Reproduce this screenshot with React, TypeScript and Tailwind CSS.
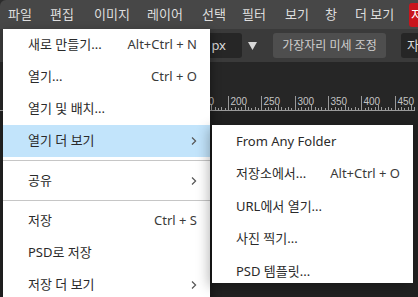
import React from "react";

const Chevron = () => (
  <svg width="6" height="10" viewBox="0 0 6 10" className="shrink-0">
    <path d="M1 1.5 L4.6 5 L1 8.5" fill="none" stroke="#555" strokeWidth="1.2" />
  </svg>
);

type Item = { label: string; shortcut?: string; sub?: boolean; active?: boolean } | "sep";

const mainItems: Item[] = [
  { label: "새로 만들기...", shortcut: "Alt+Ctrl + N" },
  { label: "열기...", shortcut: "Ctrl + O" },
  { label: "열기 및 배치..." },
  { label: "열기 더 보기", sub: true, active: true },
  "sep",
  { label: "공유", sub: true },
  "sep",
  { label: "저장", shortcut: "Ctrl + S" },
  { label: "PSD로 저장" },
  { label: "저장 더 보기", sub: true },
];

const subItems = [
  { label: "From Any Folder" },
  { label: "저장소에서...", shortcut: "Alt+Ctrl + O" },
  { label: "URL에서 열기..." },
  { label: "사진 찍기..." },
  { label: "PSD 템플릿..." },
];

const menus = [
  { label: "파일", w: "w-[42px]" },
  { label: "편집", w: "w-[44px]" },
  { label: "이미지", w: "w-[53px]" },
  { label: "레이어", w: "w-[55px]" },
  { label: "선택", w: "w-[40px]" },
  { label: "필터", w: "w-[43px]" },
  { label: "보기", w: "w-[40px]" },
  { label: "창", w: "w-[30px]" },
  { label: "더 보기", w: "w-[54px]" },
];

// ruler: 50 units per 33.3px, the 200 mark sits at x=228
const Ruler = () => {
  const step = 33.3 / 10;
  const origin = 228 - 33.3 * 2;
  const ticks = [];
  for (let i = 0; i < 80; i++) {
    const x = Math.round(origin + i * step) + 0.5;
    const major = i % 10 === 0;
    const mid = i % 5 === 0;
    ticks.push(
      <line
        key={i}
        x1={x}
        x2={x}
        y1={major ? 8 : mid ? 17 : i % 2 === 0 ? 19 : 20}
        y2={22}
        stroke="#9a9a9a"
        strokeWidth="1"
      />
    );
  }
  const labels = [100, 150, 200, 250, 300, 350, 400, 450];
  return (
    <svg width="415" height="23" className="block">
      {ticks}
      <line x1="0" x2="415" y1="22.5" y2="22.5" stroke="#9a9a9a" />
      {labels.map((n, k) => (
        <text
          key={n}
          x={Math.round(origin + k * 33.3) + 2.5}
          y="17"
          fontSize="10"
          fill="#c4c4c4"
          fontFamily="Liberation Sans, sans-serif"
        >
          {n}
        </text>
      ))}
    </svg>
  );
};

export default function App() {
  return (
    <div className="relative h-[297px] w-[418px] overflow-hidden bg-[#2c2c2c] font-['Noto_Sans','Noto_Sans_CJK_KR',sans-serif] text-[13px]">
      {/* menu bar */}
      <div className="flex h-[29px] items-center overflow-hidden rounded-tl-[6px] bg-[#474747] pl-2 whitespace-nowrap text-[#dedede]">
        {menus.map((m) => (
          <span key={m.label} className={`shrink-0 ${m.w}`}>
            {m.label}
          </span>
        ))}
        <span className="flex h-[24px] shrink-0 items-center rounded-l-[3px] bg-[#c9141c] pl-[2px] text-white">
          저장
        </span>
      </div>

      <div className="flex h-[268px]">
        <div className="flex w-[3px] flex-col bg-[#2f2f2f]">
          <div className="h-[68px]" />
          <div className="h-[28px] bg-[#3d7ed8]" />
        </div>
        <div className="flex flex-1 flex-col">
          {/* options toolbar */}
          <div className="flex h-[33px] items-center bg-[#3a3a3a] whitespace-nowrap">
            <div className="ml-[167px] flex h-[25px] w-[75px] items-center justify-end rounded-[3px] bg-[#262626] pr-[16px] text-[#dcdcdc]">
              10 px
            </div>
            <svg width="9" height="8" viewBox="0 0 9 8" className="ml-[6px]">
              <polygon points="0,0 9,0 4.5,8" fill="#d8d8d8" />
            </svg>
            <div className="ml-[16px] flex h-[25px] w-[113px] items-center justify-center rounded-[3px] bg-[#4e4e4e] text-[12px] text-[#cfcfcf]">
              가장자리 미세 조정
            </div>
            <div className="ml-[15px] flex h-[25px] w-[40px] items-center rounded-[3px] bg-[#262626] pl-[6px] text-[#dcdcdc]">
              자르기
            </div>
          </div>
          <div className="h-[26px] bg-[#262626]" />
          <div className="bg-[#262626]">
            <Ruler />
          </div>
          <div className="flex-1 bg-[#212121]" />
        </div>
      </div>

      {/* file menu */}
      <div className="absolute top-[29px] left-[3px] w-[207px] bg-white text-[#2a2a2a] shadow-[2px_2px_8px_rgba(0,0,0,0.35)]">
        {mainItems.map((it, i) =>
          it === "sep" ? (
            <div key={i} className="pt-[3px] pb-[4px]">
              <div className="h-px bg-[#c6c6c6]" />
            </div>
          ) : (
            <div
              key={i}
              className={`flex h-[32px] items-center justify-between pr-[13px] pl-[25px] whitespace-nowrap ${
                it.active ? "bg-[#c2e4fb]" : ""
              }`}
            >
              <span>{it.label}</span>
              {it.shortcut && <span className="text-[#3a3a3a]">{it.shortcut}</span>}
              {it.sub && <Chevron />}
            </div>
          )
        )}
      </div>

      {/* open-more submenu */}
      <div className="absolute top-[125px] left-[212px] h-[158px] w-[201px] overflow-hidden bg-white text-[#2a2a2a] shadow-[-3px_3px_12px_rgba(0,0,0,0.3)]">
        {subItems.map((it) => (
          <div
            key={it.label}
            className="flex h-[32.5px] items-center justify-between pr-[13px] pl-[24px] whitespace-nowrap"
          >
            <span>{it.label}</span>
            {it.shortcut && <span className="text-[#3a3a3a]">{it.shortcut}</span>}
          </div>
        ))}
      </div>
    </div>
  );
}
